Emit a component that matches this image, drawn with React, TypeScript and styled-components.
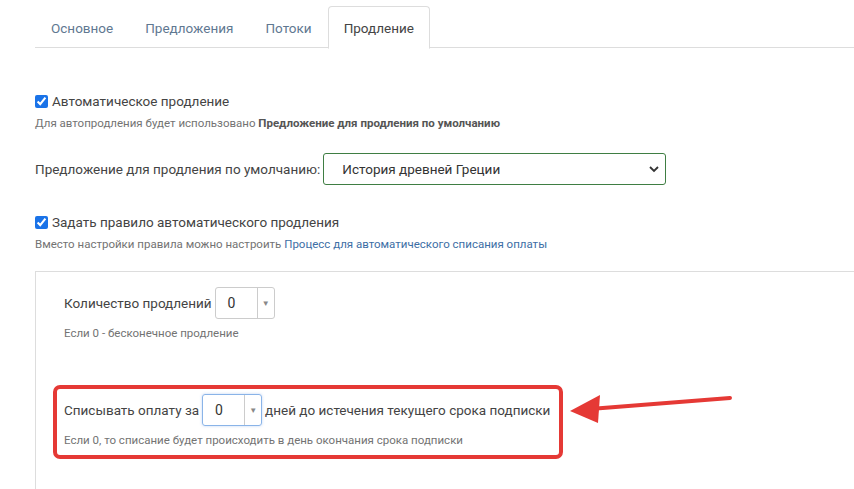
import React from "react";
import styled, { createGlobalStyle } from "styled-components";

const G = createGlobalStyle`
  body { margin: 0; background: #fff; font-family: Roboto, "Noto Sans", sans-serif; color: #333; }
`;
const Page = styled.div`position: relative; width: 854px; height: 489px; overflow: hidden; padding-left: 35px; box-sizing: border-box;`;
const Tabs = styled.div`display: flex; margin-top: 6px; border-bottom: 1px solid #ddd; height: 41px; box-sizing: content-box;`;
const Tab = styled.div<{ $active?: boolean }>`
  padding: 0 15px; height: 41px; display: flex; align-items: center; font-size: 13.5px;
  color: ${p => (p.$active ? "#444" : "#5f7891")};
  ${p => p.$active ? "border: 1px solid #ddd; border-bottom-color: #fff; border-radius: 4px 4px 0 0; margin-bottom: -1px; background:#fff;" : "border: 1px solid transparent;"}
`;
const Check = styled.label`display: flex; align-items: center; gap: 4px; font-size: 13.5px; color: #444;
  input { margin: 0; width: 13px; height: 13px; accent-color: #1a73e8; }`;
const Help = styled.div`font-size: 11.5px; color: #737373; margin-top: 7px; white-space: nowrap; b { color: #555; } a { color: #3d6ea5; text-decoration: none; }`;
const Row = styled.div`display: flex; align-items: center; font-size: 13.5px; color: #444; white-space: nowrap;`;
const Select = styled.div`margin-left: 3px; width: 343px; height: 32px; box-sizing: border-box; border: 1px solid #3f7e43; border-radius: 3px;
  display: flex; align-items: center; justify-content: space-between; padding: 0 6px 0 18px; font-size: 13.5px; color: #333;`;
const Panel = styled.div`margin-top: 20px; border-top: 1px solid #ddd; border-left: 1px solid #ddd; height: 240px; padding: 15px 0 0 28px;`;
const Spin = styled.div<{ $focus?: boolean }>`width: 60px; height: 32px; box-sizing: border-box; margin: 0 3px;
  border: 1px solid ${p => (p.$focus ? "#8ab4e8" : "#ccc")}; border-radius: 3px; display: flex;
  ${p => p.$focus ? "box-shadow: 0 0 3px rgba(100,150,230,.4);" : ""}
  span { flex: 1; display:flex; align-items:center; padding-left: 12px; font-size: 14px; color: #333; }
  i { width: 16px; border-left: 1px solid #ccc; display:flex; align-items:center; justify-content:center; font-style: normal; font-size: 8px; color: #888; }`;
const RedBox = styled.div`margin-top: 45px; margin-left: -11px; width: 510px; height: 74px; box-sizing: border-box;
  border: 4px solid #e53935; border-radius: 7px; padding: 5px 0 0 7px;`;
const Arrow = styled.svg`position: absolute; left: 560px; top: 385px;`;

export default function App() {
  return (
    <Page>
      <G />
      <Tabs>
        <Tab>Основное</Tab>
        <Tab>Предложения</Tab>
        <Tab>Потоки</Tab>
        <Tab $active>Продление</Tab>
      </Tabs>
      <div style={{ height: 45 }} />
      <Check><input type="checkbox" defaultChecked />Автоматическое продление</Check>
      <Help>Для автопродления будет использовано <b>Предложение для продления по умолчанию</b></Help>
      <div style={{ height: 23 }} />
      <Row>Предложение для продления по умолчанию:
        <Select>История древней Греции
          <svg width="10" height="8" viewBox="0 0 10 8"><path d="M1 2l4 4 4-4" fill="none" stroke="#333" strokeWidth="1.8" /></svg>
        </Select>
      </Row>
      <div style={{ height: 29 }} />
      <Check><input type="checkbox" defaultChecked />Задать правило автоматического продления</Check>
      <Help>Вместо настройки правила можно настроить <a>Процесс для автоматического списания оплаты</a></Help>
      <Panel>
        <Row>Количество продлений<Spin><span>0</span><i>▼</i></Spin></Row>
        <Help>Если 0 - бесконечное продление</Help>
        <RedBox>
          <Row>Списывать оплату за<Spin $focus><span>0</span><i>▼</i></Spin>дней до истечения текущего срока подписки</Row>
          <Help>Если 0, то списание будет происходить в день окончания срока подписки</Help>
        </RedBox>
      </Panel>
      <Arrow width="180" height="40" viewBox="0 0 180 40">
        <path d="M170 13 L30 24" stroke="#e53935" strokeWidth="4" strokeLinecap="round" />
        <path d="M10 26 L40 10 L38 38 Z" fill="#e53935" />
      </Arrow>
    </Page>
  );
}
